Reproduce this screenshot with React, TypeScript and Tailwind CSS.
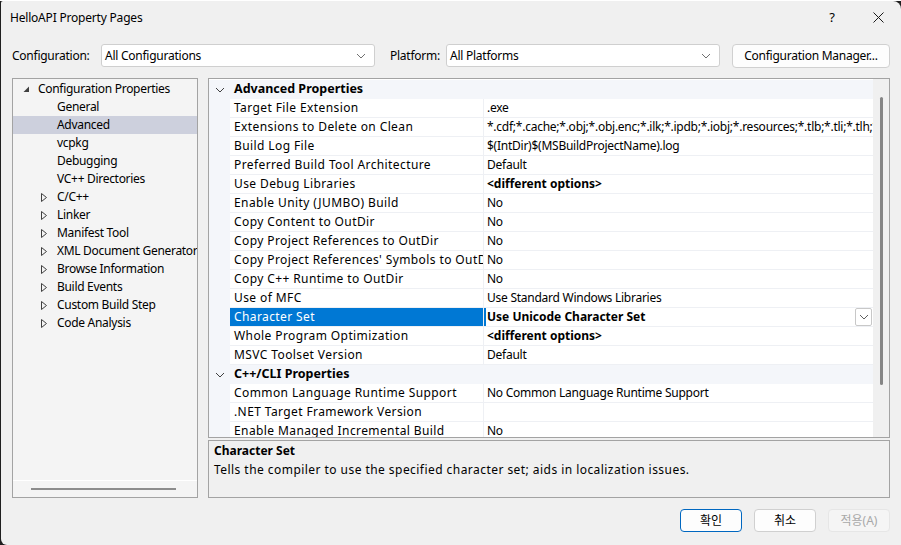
import React from "react";

const font = { fontFamily: '"Noto Sans", "Noto Sans CJK KR", sans-serif' };

type Tree = { label: string; level: 0 | 1; arrow?: "open" | "closed"; selected?: boolean };

const treeItems: Tree[] = [
  { label: "Configuration Properties", level: 0, arrow: "open" },
  { label: "General", level: 1 },
  { label: "Advanced", level: 1, selected: true },
  { label: "vcpkg", level: 1 },
  { label: "Debugging", level: 1 },
  { label: "VC++ Directories", level: 1 },
  { label: "C/C++", level: 1, arrow: "closed" },
  { label: "Linker", level: 1, arrow: "closed" },
  { label: "Manifest Tool", level: 1, arrow: "closed" },
  { label: "XML Document Generator", level: 1, arrow: "closed" },
  { label: "Browse Information", level: 1, arrow: "closed" },
  { label: "Build Events", level: 1, arrow: "closed" },
  { label: "Custom Build Step", level: 1, arrow: "closed" },
  { label: "Code Analysis", level: 1, arrow: "closed" },
];

type Row =
  | { kind: "header"; label: string }
  | { kind: "prop"; name: string; value: string; bold?: boolean; selected?: boolean };

const rows: Row[] = [
  { kind: "header", label: "Advanced Properties" },
  { kind: "prop", name: "Target File Extension", value: ".exe" },
  {
    kind: "prop",
    name: "Extensions to Delete on Clean",
    value: "*.cdf;*.cache;*.obj;*.obj.enc;*.ilk;*.ipdb;*.iobj;*.resources;*.tlb;*.tli;*.tlh;*.tmp;*.rsp;*.pgc;*.pgd",
  },
  { kind: "prop", name: "Build Log File", value: "$(IntDir)$(MSBuildProjectName).log" },
  { kind: "prop", name: "Preferred Build Tool Architecture", value: "Default" },
  { kind: "prop", name: "Use Debug Libraries", value: "<different options>", bold: true },
  { kind: "prop", name: "Enable Unity (JUMBO) Build", value: "No" },
  { kind: "prop", name: "Copy Content to OutDir", value: "No" },
  { kind: "prop", name: "Copy Project References to OutDir", value: "No" },
  { kind: "prop", name: "Copy Project References' Symbols to OutDir", value: "No" },
  { kind: "prop", name: "Copy C++ Runtime to OutDir", value: "No" },
  { kind: "prop", name: "Use of MFC", value: "Use Standard Windows Libraries" },
  { kind: "prop", name: "Character Set", value: "Use Unicode Character Set", bold: true, selected: true },
  { kind: "prop", name: "Whole Program Optimization", value: "<different options>", bold: true },
  { kind: "prop", name: "MSVC Toolset Version", value: "Default" },
  { kind: "header", label: "C++/CLI Properties" },
  { kind: "prop", name: "Common Language Runtime Support", value: "No Common Language Runtime Support" },
  { kind: "prop", name: ".NET Target Framework Version", value: "" },
  { kind: "prop", name: "Enable Managed Incremental Build", value: "No" },
];

function Chevron({ className }: { className?: string }) {
  return (
    <svg width="10" height="6" viewBox="0 0 10 6" className={className}>
      <path d="M1 1 L5 5 L9 1" fill="none" stroke="currentColor" strokeWidth="1" />
    </svg>
  );
}

function Select({ value, width }: { value: string; width: string }) {
  return (
    <div
      className={`flex h-[23px] items-center justify-between rounded-[3px] border border-[#cfcfcf] bg-white pl-[3px] pr-[8px] text-[12px] tracking-[-0.25px] text-black ${width}`}
    >
      <span>{value}</span>
      <Chevron className="text-[#707070]" />
    </div>
  );
}

function TreePanel() {
  return (
    <div className="flex w-[186px] flex-col border border-[#a3a3a3] bg-[#f4f4f4]">
      <div className="flex-1 overflow-hidden pt-[1px]">
        {treeItems.map((t) => (
          <div
            key={t.label}
            className={`flex h-[18px] items-center whitespace-nowrap text-[12px] tracking-[-0.3px] text-black ${
              t.selected ? "bg-[#cdd0dd]" : ""
            }`}
            style={{ paddingLeft: t.level === 0 ? 10 : 28 }}
          >
            <span className="flex w-[16px] shrink-0 items-center justify-start">
              {t.arrow === "open" && (
                <svg width="7" height="7" viewBox="0 0 7 7">
                  <path d="M6 0.5 L6 6 L0.5 6 Z" fill="#404040" />
                </svg>
              )}
              {t.arrow === "closed" && (
                <svg width="6" height="9" viewBox="0 0 6 9">
                  <path d="M0.5 0.5 L5.5 4.5 L0.5 8.5 Z" fill="none" stroke="#404040" strokeWidth="1" />
                </svg>
              )}
            </span>
            <span className={t.level === 0 ? "-ml-[1px]" : "ml-[0px]"}>{t.label}</span>
          </div>
        ))}
      </div>
      <div className="flex h-[17px] items-center border-t border-[#ffffff] pl-[18px]">
        <div className="h-[2px] w-[145px] bg-[#8c8c8c]" />
      </div>
    </div>
  );
}

function PropRow({ row }: { row: Row }) {
  if (row.kind === "header") {
    return (
      <div className="flex h-[19px] shrink-0 items-center bg-[#f4f6fa] text-[12.5px] font-bold text-black">
        <span className="flex w-[21px] justify-center">
          <Chevron className="text-[#404040]" />
        </span>
        <span className="pl-[4px]">{row.label}</span>
      </div>
    );
  }
  return (
    <div className="flex h-[19px] shrink-0">
      <div className="w-[21px] shrink-0 bg-[#f4f6fa]" />
      <div
        className={`flex w-[254px] shrink-0 items-center overflow-hidden whitespace-nowrap border-b border-r border-[#eef0f4] pl-[4px] text-[12px] tracking-[0.4px] ${
          row.selected ? "bg-[#0078d4] text-white" : "bg-white text-black"
        }`}
      >
        {row.name}
      </div>
      <div className="relative flex min-w-0 flex-1 items-center overflow-hidden whitespace-nowrap border-b border-[#eef0f4] bg-white pl-[3px] text-[12px] tracking-[-0.25px] text-black">
        {row.selected && <div className="absolute left-0 top-0 h-full w-[2px] bg-[#0078d4]" />}
        <span className={row.bold ? "font-bold tracking-[0px]" : ""}>{row.value}</span>
        {row.selected && (
          <div className="absolute right-[1px] top-[0px] flex h-[18px] w-[17px] items-center justify-center rounded-[2px] border border-[#c8c8c8] bg-white">
            <Chevron className="text-[#606060]" />
          </div>
        )}
      </div>
    </div>
  );
}

function PropertyGrid() {
  return (
    <div className="flex h-[360px] border border-[#a3a3a3] bg-white">
      <div className="flex min-w-0 flex-1 flex-col overflow-hidden pt-[1px]">
        {rows.map((r, i) => (
          <PropRow key={i} row={r} />
        ))}
      </div>
      <div className="flex w-[16px] shrink-0 justify-center bg-[#f0f0f0] pt-[18px]">
        <div className="h-[288px] w-[3px] rounded-full bg-[#858585]" />
      </div>
    </div>
  );
}

function Button({ label, primary, disabled }: { label: string; primary?: boolean; disabled?: boolean }) {
  return (
    <div
      className={`flex h-[23px] w-[62px] items-center justify-center rounded-[4px] border text-[12px] ${
        primary
          ? "border-[#0067c0] bg-[#fdfdfd] text-black"
          : disabled
          ? "border-[#e6e6e6] bg-[#f5f5f5] text-[#a8a8a8]"
          : "border-[#d0d0d0] bg-[#fdfdfd] text-black"
      }`}
    >
      {label}
    </div>
  );
}

export default function App() {
  return (
    <div className="h-[545px] w-[901px] bg-[#1f1f1f]" style={font}>
      <div className="ml-[1px] mt-[1px] flex h-[544px] w-[900px] flex-col rounded-tl-[2px] rounded-tr-[8px] rounded-bl-[6px] bg-[#f0f0f0]">
        <div className="flex h-[33px] items-center justify-between pl-[9px]">
          <span className="text-[12px] tracking-[-0.2px] text-black">HelloAPI Property Pages</span>
          <div className="flex items-center">
            <span className="w-[46px] text-center text-[13px] text-black">?</span>
            <span className="flex w-[46px] justify-center">
              <svg width="11" height="11" viewBox="0 0 11 11">
                <path d="M0.5 0.5 L10.5 10.5 M10.5 0.5 L0.5 10.5" stroke="#1a1a1a" strokeWidth="1" />
              </svg>
            </span>
          </div>
        </div>
        <div className="mt-[10px] flex h-[23px] items-center pl-[11px] pr-[11px] text-[12px] tracking-[-0.25px] text-black">
          <span className="w-[89px]">Configuration:</span>
          <Select value="All Configurations" width="w-[274px]" />
          <span className="ml-[15px] w-[56px]">Platform:</span>
          <Select value="All Platforms" width="w-[274px]" />
          <div className="ml-[12px] flex h-[24px] flex-1 items-center justify-center rounded-[4px] border border-[#d0d0d0] bg-[#fdfdfd]">
            Configuration Manager...
          </div>
        </div>
        <div className="mt-[11px] flex h-[420px] gap-[10px] pl-[11px] pr-[11px]">
          <TreePanel />
          <div className="flex min-w-0 flex-1 flex-col gap-[2px]">
            <PropertyGrid />
            <div className="flex h-[58px] flex-col border border-[#a3a3a3] bg-[#f0f0f0] px-[5px] pt-[1px] text-[12px] text-black">
              <span className="font-bold">Character Set</span>
              <span className="mt-[1px] tracking-[0.45px]">
                Tells the compiler to use the specified character set; aids in localization issues.
              </span>
            </div>
          </div>
        </div>
        <div className="mt-[11px] flex justify-end gap-[12px] pr-[11px]">
          <Button label="확인" primary />
          <Button label="취소" />
          <Button label="적용(A)" disabled />
        </div>
      </div>
    </div>
  );
}
